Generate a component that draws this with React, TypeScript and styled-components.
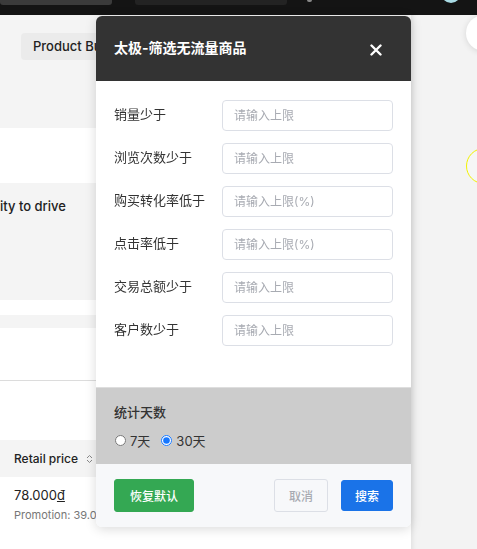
import { useState } from "react";
import styled, { createGlobalStyle } from "styled-components";

const GlobalStyle = createGlobalStyle`
  html, body {
    margin: 0;
    padding: 0;
    background: #f4f4f4;
    overflow: hidden;
  }
  body {
    font-family: Inter, "Noto Sans CJK SC", sans-serif;
    color: #222;
  }
`;

const Page = styled.div`
  width: 477px;
  height: 549px;
  display: flex;
  flex-direction: column;
  overflow: hidden;
`;

const TopBar = styled.div`
  height: 15px;
  flex-shrink: 0;
  background: #141414;
  display: flex;
  align-items: flex-start;
`;

const BarBox = styled.div<{ $w: number; $bg: string; $ml: number }>`
  width: ${(p) => p.$w}px;
  margin-left: ${(p) => p.$ml}px;
  height: 5px;
  background: ${(p) => p.$bg};
  border-radius: 0 0 3px 3px;
`;

const BarIcon = styled.div`
  width: 5px;
  height: 2px;
  margin-left: 20px;
  background: #888;
  border-radius: 0 0 2px 2px;
`;

const Avatar = styled.div`
  width: 20px;
  height: 20px;
  margin-left: auto;
  margin-right: 16px;
  margin-top: -17px;
  border-radius: 50%;
  background: #a9dbe4;
`;

const Main = styled.div`
  flex: 1;
  display: flex;
  min-height: 0;
`;

const Content = styled.div`
  width: 411px;
  flex-shrink: 0;
  display: flex;
  flex-direction: column;
  background: #fff;
`;

const Band = styled.div<{ $h: number; $bg?: string }>`
  height: ${(p) => p.$h}px;
  flex-shrink: 0;
  background: ${(p) => p.$bg || "#fff"};
`;

const Hero = styled.div`
  height: 113px;
  flex-shrink: 0;
  background: #f4f4f4;
  padding: 18px 0 0 21px;
  box-sizing: border-box;
`;

const Tag = styled.div`
  width: 75px;
  height: 27px;
  padding-left: 12px;
  box-sizing: border-box;
  border-radius: 4px 0 0 4px;
  background: #ebebeb;
  font-size: 13px;
  font-weight: 500;
  line-height: 27px;
  color: #222;
  white-space: nowrap;
  overflow: hidden;
`;

const InfoCard = styled.div`
  height: 117px;
  flex-shrink: 0;
  background: #f4f4f4;
  padding-top: 15px;
  box-sizing: border-box;
  font-size: 13px;
  font-weight: 500;
  color: #222;
  white-space: nowrap;
`;

const Divider = styled.div`
  height: 1px;
  background: #dcdcdc;
  flex-shrink: 0;
`;

const TableHead = styled.div`
  height: 37px;
  flex-shrink: 0;
  background: #f4f4f4;
  display: flex;
  align-items: center;
  padding-left: 14px;
  gap: 8px;
  font-size: 12px;
  font-weight: 500;
  color: #222;
`;

const SortIcon = styled.span`
  display: inline-flex;
  flex-direction: column;
  color: #888;
`;

const Cell = styled.div`
  width: 82px;
  padding: 10px 0 0 14px;
  display: flex;
  flex-direction: column;
  gap: 5px;
  overflow: hidden;
`;

const Price = styled.div`
  font-size: 13px;
  color: #222;
`;

const Promo = styled.div`
  font-size: 11px;
  color: #777;
  white-space: nowrap;
`;

const Sidebar = styled.div`
  flex: 1;
  position: relative;
  background: #f3f3f3;
  box-shadow: inset 6px 0 6px -6px rgba(0, 0, 0, 0.12);
`;

const FloatButton = styled.div`
  position: absolute;
  left: 55px;
  top: 0;
  width: 36px;
  height: 36px;
  border-radius: 50%;
  background: #fff;
  box-shadow: 0 1px 6px rgba(0, 0, 0, 0.12);
`;

const RingButton = styled.div`
  position: absolute;
  left: 55px;
  top: 133px;
  width: 34px;
  height: 34px;
  border-radius: 50%;
  border: 1px solid #f2f200;
  background: #f6f6f6;
`;

const Modal = styled.div`
  position: fixed;
  left: 96px;
  top: 16px;
  width: 315px;
  height: 511px;
  border-radius: 6px;
  overflow: hidden;
  background: #fff;
  display: flex;
  flex-direction: column;
  box-shadow: 0 2px 12px rgba(0, 0, 0, 0.15);
`;

const ModalHeader = styled.div`
  height: 65px;
  flex-shrink: 0;
  background: #333;
  display: flex;
  align-items: center;
  justify-content: space-between;
  padding: 0 29px 0 18px;
`;

const ModalTitle = styled.h2`
  margin: 0 0 3px;
  font-size: 14px;
  font-weight: 700;
  color: #fff;
`;

const CloseButton = styled.button`
  border: none;
  background: none;
  padding: 0;
  margin-top: 3px;
  display: flex;
  cursor: pointer;
`;

const ModalBody = styled.div`
  padding: 19px 18px 41px;
  display: flex;
  flex-direction: column;
  gap: 12px;
`;

const Row = styled.div`
  display: flex;
  align-items: center;
`;

const Label = styled.label`
  width: 108px;
  font-size: 13px;
  color: #333;
  margin-top: -4px;
`;

const Input = styled.input`
  width: 171px;
  height: 31px;
  box-sizing: border-box;
  border: 1px solid #dcdfe6;
  border-radius: 4px;
  padding: 0 11px;
  font-family: inherit;
  font-size: 12px;
  color: #333;
  outline: none;
  &::placeholder {
    color: #a8abb2;
  }
`;

const DaysSection = styled.div`
  height: 77px;
  flex-shrink: 0;
  box-sizing: border-box;
  background: #cccccc;
  border-top: 1px solid #dedede;
  padding: 14px 18px 0;
`;

const DaysTitle = styled.div`
  font-size: 13px;
  font-weight: 500;
  color: #333;
`;

const RadioGroup = styled.div`
  display: flex;
  gap: 10px;
  margin-top: 10px;
`;

const RadioLabel = styled.label`
  display: flex;
  align-items: center;
  gap: 4px;
  font-size: 13px;
  color: #333;
  cursor: pointer;
  input {
    width: 11px;
    height: 11px;
    margin: 0 0 0 1px;
    accent-color: #1677ff;
  }
`;

const Footer = styled.div`
  flex: 1;
  background: #f7f8fa;
  display: flex;
  align-items: center;
  padding: 0 18px 0;
  gap: 13px;
`;

const Button = styled.button<{ $variant: "green" | "plain" | "blue" }>`
  height: ${(p) => (p.$variant === "blue" ? 31 : 33)}px;
  padding: 0 ${(p) => (p.$variant === "green" ? 15 : p.$variant === "blue" ? 13 : 14)}px;
  border-radius: 3px;
  font-family: inherit;
  font-size: 12px;
  font-weight: 500;
  cursor: pointer;
  border: 1px solid
    ${(p) =>
      p.$variant === "green" ? "#34a853" : p.$variant === "blue" ? "#1a73e8" : "#dcdfe6"};
  background: ${(p) =>
    p.$variant === "green" ? "#34a853" : p.$variant === "blue" ? "#1a73e8" : "#f7f8fa"};
  color: ${(p) => (p.$variant === "plain" ? "#a8abb2" : "#fff")};
  &:first-child {
    margin-right: auto;
  }
`;

const fields = [
  { label: "销量少于", placeholder: "请输入上限" },
  { label: "浏览次数少于", placeholder: "请输入上限" },
  { label: "购买转化率低于", placeholder: "请输入上限(%)" },
  { label: "点击率低于", placeholder: "请输入上限(%)" },
  { label: "交易总额少于", placeholder: "请输入上限" },
  { label: "客户数少于", placeholder: "请输入上限" },
];

export default function App() {
  const [days, setDays] = useState("30");
  return (
    <>
      <GlobalStyle />
      <Page>
        <TopBar>
          <BarBox $w={112} $ml={0} $bg="#3b3b3b" />
          <BarBox $w={152} $ml={23} $bg="#232323" />
          <BarIcon />
          <Avatar />
        </TopBar>
        <Main>
          <Content>
            <Hero>
              <Tag>Product Business Insights</Tag>
            </Hero>
            <Band $h={55} />
            <InfoCard>ity to drive</InfoCard>
            <Band $h={15} />
            <Band $h={13} $bg="#f4f4f4" />
            <Band $h={52} />
            <Divider />
            <Band $h={59} />
            <TableHead>
              Retail price
              <SortIcon>
                <svg width="7" height="10" viewBox="0 0 7 10">
                  <path d="M1 4 L3.5 1.5 L6 4 M1 6 L3.5 8.5 L6 6" fill="none" stroke="#888" strokeWidth="1" />
                </svg>
              </SortIcon>
            </TableHead>
            <Cell>
              <Price>
                78.000<u>đ</u>
              </Price>
              <Promo>Promotion: 39.000đ</Promo>
            </Cell>
          </Content>
          <Sidebar>
            <FloatButton />
            <RingButton />
          </Sidebar>
        </Main>
      </Page>

      <Modal>
        <ModalHeader>
          <ModalTitle>太极-筛选无流量商品</ModalTitle>
          <CloseButton aria-label="close">
            <svg width="12" height="12" viewBox="0 0 12 12">
              <path d="M1.5 1.5 L10.5 10.5 M10.5 1.5 L1.5 10.5" stroke="#fff" strokeWidth="2.4" strokeLinecap="round" />
            </svg>
          </CloseButton>
        </ModalHeader>
        <ModalBody>
          {fields.map((f) => (
            <Row key={f.label}>
              <Label>{f.label}</Label>
              <Input placeholder={f.placeholder} />
            </Row>
          ))}
        </ModalBody>
        <DaysSection>
          <DaysTitle>统计天数</DaysTitle>
          <RadioGroup>
            <RadioLabel>
              <input type="radio" name="days" checked={days === "7"} onChange={() => setDays("7")} />
              7天
            </RadioLabel>
            <RadioLabel>
              <input type="radio" name="days" checked={days === "30"} onChange={() => setDays("30")} />
              30天
            </RadioLabel>
          </RadioGroup>
        </DaysSection>
        <Footer>
          <Button $variant="green">恢复默认</Button>
          <Button $variant="plain">取消</Button>
          <Button $variant="blue">搜索</Button>
        </Footer>
      </Modal>
    </>
  );
}
